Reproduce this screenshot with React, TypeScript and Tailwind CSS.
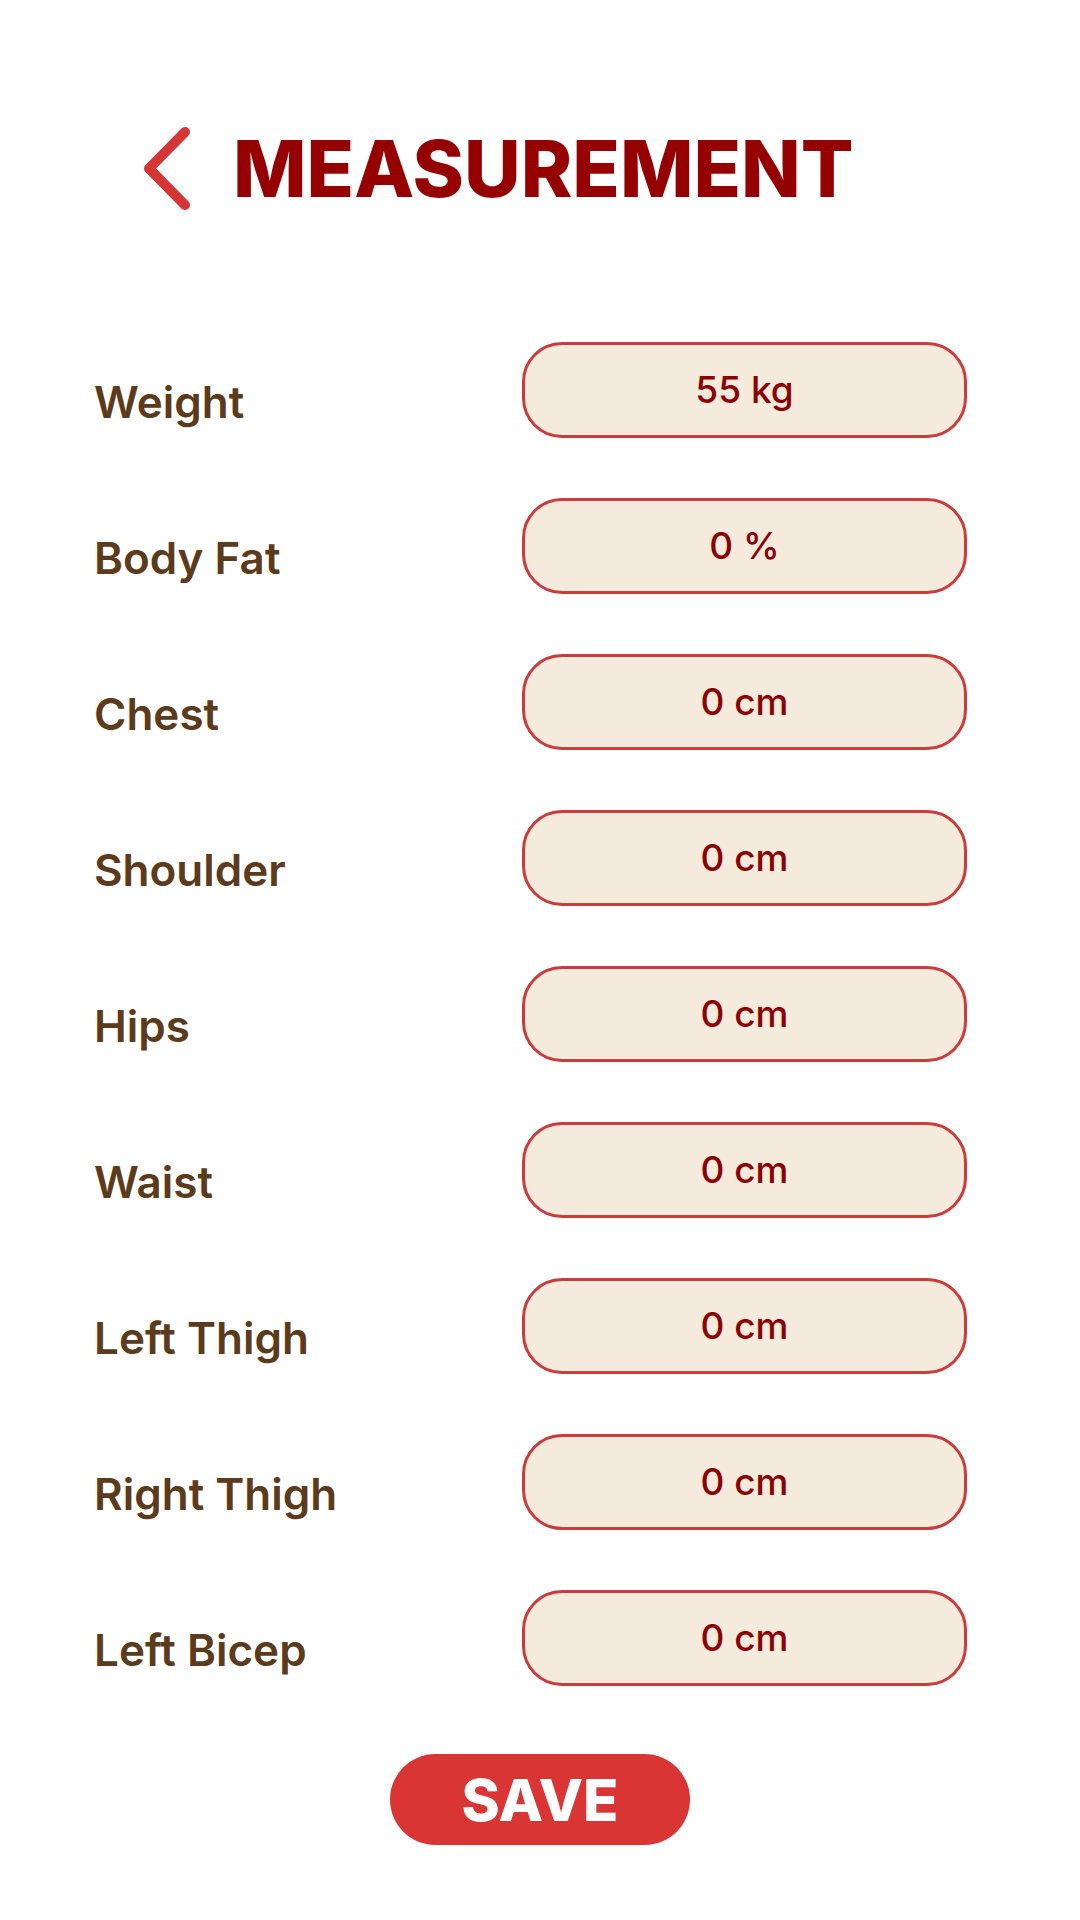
import React from "react";

const rows: [string, string][] = [
  ["Weight", "55 kg"],
  ["Body Fat", "0 %"],
  ["Chest", "0 cm"],
  ["Shoulder", "0 cm"],
  ["Hips", "0 cm"],
  ["Waist", "0 cm"],
  ["Left Thigh", "0 cm"],
  ["Right Thigh", "0 cm"],
  ["Left Bicep", "0 cm"],
];

export default function App() {
  return (
    <div className="w-[1080px] h-[1920px] bg-white font-['Inter',sans-serif] flex flex-col">
      <div className="flex items-center pt-[126px] pl-[141px]">
        <svg width="51" height="85" viewBox="0 0 51 85" className="shrink-0">
          <polyline
            points="44,6 8,42.5 44,79"
            fill="none"
            stroke="#d63535"
            strokeWidth="10"
            strokeLinecap="round"
            strokeLinejoin="round"
          />
        </svg>
        <h1 className="ml-[41px] text-[78px] leading-none font-extrabold text-[#950000]">
          MEASUREMENT
        </h1>
      </div>

      <div className="flex flex-col gap-[60px] mt-[131px]">
        {rows.map(([label, value]) => (
          <div key={label} className="flex items-center h-[96px]">
            <div className="w-[522px] shrink-0 pl-[94px] pt-[24px] text-[44px] font-semibold text-[#5c3b1c] leading-none">
              {label}
            </div>
            <div className="w-[445px] h-[96px] rounded-[40px] border-[3px] border-[#cc3b3b] bg-[#f5ebdc] flex items-center justify-center text-[37px] font-medium text-[#8b0000]">
              {value}
            </div>
          </div>
        ))}
      </div>

      <div className="flex justify-center mt-[68px]">
        <button className="w-[300px] h-[91px] rounded-[46px] bg-[#d93535] text-white text-[58px] font-extrabold leading-none flex items-center justify-center">
          SAVE
        </button>
      </div>
    </div>
  );
}
